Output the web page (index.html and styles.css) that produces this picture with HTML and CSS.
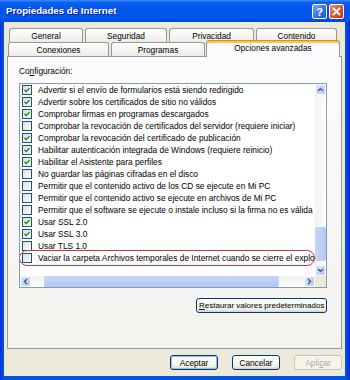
FILE: index.html
```html
<!DOCTYPE html>
<html>
<head>
  <link rel="stylesheet" href="styles.css">
</head>
<body>
  <div class="window">
    <div class="titlebar">
      <span class="title">Propiedades de Internet</span>
      <div class="title-buttons">
        <button class="tb help">?</button>
        <button class="tb close">
          <svg width="9" height="9" viewBox="0 0 9 9">
            <path d="M1.5 1.5L7.5 7.5M7.5 1.5L1.5 7.5" stroke="#fff" stroke-width="1.8" stroke-linecap="round"/>
          </svg>
        </button>
      </div>
    </div>

    <div class="client">
      <div class="tabs">
        <div class="tab-row back">
          <div class="tab w-general">General</div>
          <div class="tab w-seguridad">Seguridad</div>
          <div class="tab w-privacidad">Privacidad</div>
          <div class="tab w-contenido">Contenido</div>
        </div>
        <div class="tab-row front">
          <div class="tab w-conexiones">Conexiones</div>
          <div class="tab w-programas">Programas</div>
          <div class="tab selected">Opciones avanzadas</div>
        </div>
      </div>

      <div class="panel">
        <div class="label">Co<u>n</u>figuración:</div>

        <div class="listbox">
          <div class="items">
            <div class="row"><span class="check on"></span>Advertir si el envío de formularios está siendo redirigido</div>
            <div class="row"><span class="check on"></span>Advertir sobre los certificados de sitio no válidos</div>
            <div class="row"><span class="check on"></span>Comprobar firmas en programas descargados</div>
            <div class="row"><span class="check"></span>Comprobar la revocación de certificados del servidor (requiere iniciar)</div>
            <div class="row"><span class="check on"></span>Comprobar la revocación del certificado de publicación</div>
            <div class="row"><span class="check on"></span>Habilitar autenticación integrada de Windows (requiere reinicio)</div>
            <div class="row"><span class="check on"></span>Habilitar el Asistente para perfiles</div>
            <div class="row"><span class="check"></span>No guardar las páginas cifradas en el disco</div>
            <div class="row"><span class="check"></span>Permitir que el contenido activo de los CD se ejecute en Mi PC</div>
            <div class="row"><span class="check"></span>Permitir que el contenido activo se ejecute en archivos de Mi PC</div>
            <div class="row"><span class="check"></span>Permitir que el software se ejecute o instale incluso si la firma no es válida</div>
            <div class="row"><span class="check on"></span>Usar SSL 2.0</div>
            <div class="row"><span class="check on"></span>Usar SSL 3.0</div>
            <div class="row"><span class="check"></span>Usar TLS 1.0</div>
            <div class="row marked"><span class="check"></span>Vaciar la carpeta Archivos temporales de Internet cuando se cierre el explorador</div>
          </div>

          <div class="vscroll">
            <div class="sb-btn">
              <svg width="7" height="5" viewBox="0 0 7 5"><path d="M1 4L3.5 1.5L6 4" stroke="#4d6185" stroke-width="1.5" fill="none"/></svg>
            </div>
            <div class="v-track"><div class="v-thumb"></div></div>
            <div class="sb-btn">
              <svg width="7" height="5" viewBox="0 0 7 5"><path d="M1 1L3.5 3.5L6 1" stroke="#4d6185" stroke-width="1.5" fill="none"/></svg>
            </div>
          </div>

          <div class="hscroll">
            <div class="sb-btn">
              <svg width="5" height="7" viewBox="0 0 5 7"><path d="M4 1L1.5 3.5L4 6" stroke="#4d6185" stroke-width="1.5" fill="none"/></svg>
            </div>
            <div class="h-track"><div class="h-thumb"></div></div>
            <div class="sb-btn">
              <svg width="5" height="7" viewBox="0 0 5 7"><path d="M1 1L3.5 3.5L1 6" stroke="#4d6185" stroke-width="1.5" fill="none"/></svg>
            </div>
          </div>
          <div class="corner"></div>
        </div>

        <div class="restore-row">
          <button class="btn"><u>R</u>estaurar valores predeterminados</button>
        </div>
      </div>

      <div class="buttons">
        <button class="btn default">Aceptar</button>
        <button class="btn">Cancelar</button>
        <button class="btn disabled">Apli<u>c</u>ar</button>
      </div>
    </div>
  </div>
</body>
</html>
```

FILE: styles.css
```css
body {
  margin: 0;
  font-family: "Liberation Sans", Arial, sans-serif;
  font-size: 8px;
  color: #000;
}

.window {
  width: 350px;
  height: 380px;
  box-sizing: border-box;
  display: flex;
  flex-direction: column;
  background: linear-gradient(to right, #0831d9, #0055e5 4px, #0055e5 calc(100% - 5px), #0831d9);
}

.titlebar {
  height: 22px;
  display: flex;
  align-items: center;
  justify-content: space-between;
  padding: 0 6px 0 6px;
  background: linear-gradient(to bottom, #3a8cff 0%, #0a5ef0 12%, #0054e6 45%, #0058ee 80%, #0046d8 100%);
}

.title {
  color: #fff;
  font-weight: bold;
  font-size: 9.7px;
  text-shadow: 1px 1px #0a1883;
  margin-top: -1px;
}

.title-buttons {
  display: flex;
  gap: 2px;
  margin-top: 1px;
}

.tb {
  width: 15px;
  height: 15px;
  padding: 0;
  border: 1px solid #fff;
  border-radius: 2px;
  display: flex;
  align-items: center;
  justify-content: center;
  color: #fff;
  font-family: "Liberation Sans", sans-serif;
  font-weight: bold;
  font-size: 11px;
}

.tb.help {
  background: linear-gradient(135deg, #7aa8fa, #2c63e8 70%, #2457d6);
}

.tb.close {
  background: linear-gradient(135deg, #f09070, #d5512c 60%, #c23a14);
}

.client {
  flex: 1;
  margin: 0 5px 4px 4px;
  padding: 6px 3px 0 3px;
  background: #ece9d8;
  display: flex;
  flex-direction: column;
}

.tab-row {
  display: flex;
  height: 14px;
  align-items: flex-start;
}

.tab-row.back {
  gap: 2px;
  padding-left: 2px;
}

.tab-row.front {
  gap: 2px;
  padding-left: 1px;
}

.tab {
  height: 14px;
  box-sizing: border-box;
  border: 1px solid #919b9c;
  border-bottom: none;
  border-radius: 3px 3px 0 0;
  background: linear-gradient(#ffffff, #ecebe6);
  display: flex;
  align-items: center;
  justify-content: center;
  font-size: 8.3px;
}

.w-general { width: 74px; }
.w-seguridad { width: 82px; }
.w-privacidad { width: 85px; }
.w-contenido { width: 81px; }
.w-conexiones { width: 101px; }
.w-programas { width: 94px; }

.tab.selected {
  width: 134px;
  height: 17px;
  margin-top: -2px;
  margin-left: -1px;
  position: relative;
  z-index: 1;
  background: #fcfcfe;
  border-top-color: #e68b2c;
  box-shadow: inset 0 2px #ffc83c;
  align-items: flex-start;
  padding-top: 2px;
}

.panel {
  height: 293px;
  box-sizing: border-box;
  border: 1px solid #919b9c;
  background: linear-gradient(#fcfcfe, #f4f3ee);
  padding: 8px 14px 0 11px;
}

.label {
  line-height: 12px;
  font-size: 8.3px;
}

.listbox {
  margin-top: 6px;
  height: 205px;
  box-sizing: border-box;
  border: 1px solid #7f9db9;
  background: #fff;
  display: grid;
  grid-template-columns: 1fr 11px;
  grid-template-rows: 1fr 11px;
  overflow: hidden;
}

.items {
  overflow: hidden;
  font-size: 8.35px;
}

.row {
  height: 12px;
  display: flex;
  align-items: center;
  gap: 6px;
  padding-left: 2px;
  white-space: nowrap;
  position: relative;
}

.row.marked::after {
  content: "";
  position: absolute;
  left: -1px;
  top: -2px;
  width: 296px;
  height: 16px;
  box-sizing: border-box;
  border: 1px solid #c8363e;
  border-radius: 8px;
}

.check {
  flex: none;
  width: 10px;
  height: 10px;
  box-sizing: border-box;
  border: 1px solid #1c5180;
  background: linear-gradient(135deg, #dcdcd7, #ffffff);
}

.check.on {
  background: url("data:image/svg+xml,%3Csvg xmlns='http://www.w3.org/2000/svg' width='8' height='8' viewBox='0 0 8 8'%3E%3Cpath d='M1.5 3.8L3.2 5.5L6.6 2' stroke='%2321a121' stroke-width='1.6' fill='none'/%3E%3C/svg%3E") center no-repeat, linear-gradient(135deg, #dcdcd7, #ffffff);
}

.vscroll {
  display: flex;
  flex-direction: column;
  background: linear-gradient(to right, #f3f1ec, #fefefb);
}

.hscroll {
  display: flex;
  background: linear-gradient(#f3f1ec, #fefefb);
}

.corner {
  background: #ece9d8;
}

.sb-btn {
  flex: none;
  width: 11px;
  height: 11px;
  box-sizing: border-box;
  border: 1px solid #fff;
  border-radius: 2px;
  background: linear-gradient(135deg, #d8e4fd, #b6cbf6);
  display: flex;
  align-items: center;
  justify-content: center;
}

.v-track {
  flex: 1;
  display: flex;
  flex-direction: column;
}

.v-thumb {
  margin-top: auto;
  margin-bottom: 4px;
  height: 34px;
  border-radius: 2px;
  background: linear-gradient(to right, #c6d6f8, #b3c8f4);
}

.h-track {
  flex: 1;
  display: flex;
}

.h-thumb {
  margin-left: 13px;
  width: 235px;
  border-radius: 2px;
  background: linear-gradient(#c6d6f8, #b3c8f4);
}

.restore-row {
  display: flex;
  justify-content: flex-end;
  margin-top: 10px;
}

.btn {
  height: 15px;
  box-sizing: border-box;
  padding: 0 2px;
  border: 1px solid #003c74;
  border-radius: 3px;
  background: linear-gradient(#ffffff, #f0f0ea 80%, #d6d0c5);
  font-family: "Liberation Sans", Arial, sans-serif;
  font-size: 8.3px;
  color: #000;
  white-space: nowrap;
}

.restore-row .btn {
  width: 131px;
  font-size: 8px;
}

.buttons {
  display: flex;
  justify-content: flex-end;
  gap: 14px;
  padding-top: 6px;
}

.buttons .btn {
  width: 48px;
}

.btn.default {
  box-shadow: inset 0 0 0 1px #9cbaf1;
}

.btn.disabled {
  border-color: #c9c7ba;
  color: #aca899;
  background: #f5f4ea;
}
```
